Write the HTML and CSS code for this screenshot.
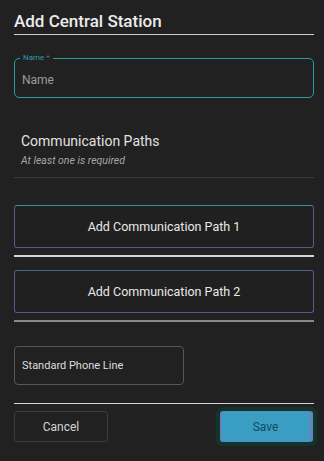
FILE: index.html
```html
<!DOCTYPE html>
<html>
<head>
<meta charset="utf-8">
<link rel="stylesheet" href="styles.css">
</head>
<body>
<div class="dialog">
  <h1 class="title">Add Central Station</h1>
  <div class="field">
    <span class="field-label">Name <span class="req">*</span></span>
    <span class="placeholder">Name</span>
  </div>
  <div class="section">
    <div class="section-title">Communication Paths</div>
    <div class="section-sub">At least one is required</div>
  </div>
  <hr class="divider dark">
  <button class="path-btn first">Add Communication Path 1</button>
  <hr class="divider light rule1">
  <button class="path-btn second">Add Communication Path 2</button>
  <hr class="divider grey rule2">
  <div class="phone">Standard Phone Line</div>
  <hr class="divider light rule3">
  <div class="actions">
    <button class="cancel">Cancel</button>
    <button class="save">Save</button>
  </div>
</div>
</body>
</html>
```
FILE: styles.css
```css
html, body {
  margin: 0;
  padding: 0;
  background: #212121;
  height: 100%;
}
body {
  font-family: Roboto, "Liberation Sans", sans-serif;
  color: #e6e6e6;
}
.dialog {
  padding: 0 10px 0 14px;
  display: flex;
  flex-direction: column;
}
.title {
  margin: 0;
  padding-top: 10px;
  font-size: 17px;
  font-weight: 500;
  line-height: 22px;
  color: #ececec;
  padding-bottom: 2px;
  border-bottom: 1px solid #d0d0d0;
}
.field {
  position: relative;
  margin-top: 23px;
  height: 40px;
  box-sizing: border-box;
  border: 1px solid #2a9a9c;
  border-radius: 5px;
  display: flex;
  align-items: center;
  padding: 4px 0 0 7px;
}
.field-label {
  position: absolute;
  top: -6px;
  left: 5px;
  padding: 0 3px;
  background: #212121;
  font-size: 8px;
  line-height: 10px;
  color: #2a9ea6;
}
.req {
  color: #6a6a6a;
}
.placeholder {
  font-size: 12px;
  color: #9b9b9b;
}
.section {
  padding: 34px 0 0 7px;
}
.section-title {
  font-size: 14px;
  line-height: 18px;
  color: #e2e2e2;
}
.section-sub {
  font-size: 10.5px;
  font-style: italic;
  line-height: 14px;
  color: #a6a6a6;
  margin-top: 4px;
}
.divider {
  border: 0;
  margin: 0;
  height: 1px;
}
.divider.dark {
  margin-top: 9px;
  background: #3b3b3b;
}
.divider.light {
  background: #d4d4d4;
}
.divider.grey {
  height: 2px;
  background: #8a8a8a;
}
.path-btn {
  height: 43px;
  box-sizing: border-box;
  background: #202020;
  border: 1px solid #545b8a;
  border-top-color: #3a8c9d;
  border-radius: 3px;
  font-family: inherit;
  font-size: 12.5px;
  color: #e8e8e8;
  text-align: center;
}
.path-btn.first {
  margin-top: 27px;
}
.path-btn.second {
  margin-top: 13px;
  border-top-color: #4f6390;
}
.rule1 {
  margin-top: 7px;
  height: 2px;
}
.rule2 {
  margin-top: 7px;
}
.phone {
  margin-top: 24px;
  width: 170px;
  height: 39px;
  box-sizing: border-box;
  border: 1px solid #575757;
  border-radius: 4px;
  display: flex;
  align-items: center;
  padding-left: 7px;
  font-size: 11px;
  color: #dedede;
}
.rule3 {
  margin-top: 18px;
}
.actions {
  margin-top: 7px;
  display: flex;
  justify-content: space-between;
  align-items: center;
}
.cancel {
  width: 94px;
  height: 31px;
  box-sizing: border-box;
  background: #212121;
  border: 1px solid #3c3c3c;
  border-radius: 3px;
  font-family: inherit;
  font-size: 12px;
  color: #d4d4d4;
}
.save {
  width: 93px;
  height: 31px;
  margin-right: 1px;
  box-sizing: border-box;
  background: #3a9ec2;
  border: 1px solid #6a7fc4;
  border-left-width: 2px;
  border-right: 4px solid #5f86c2;
  border-radius: 3px;
  font-family: inherit;
  font-size: 12px;
  color: #174a60;
  box-shadow: 0 0 0 4px #10362a;
}
```
